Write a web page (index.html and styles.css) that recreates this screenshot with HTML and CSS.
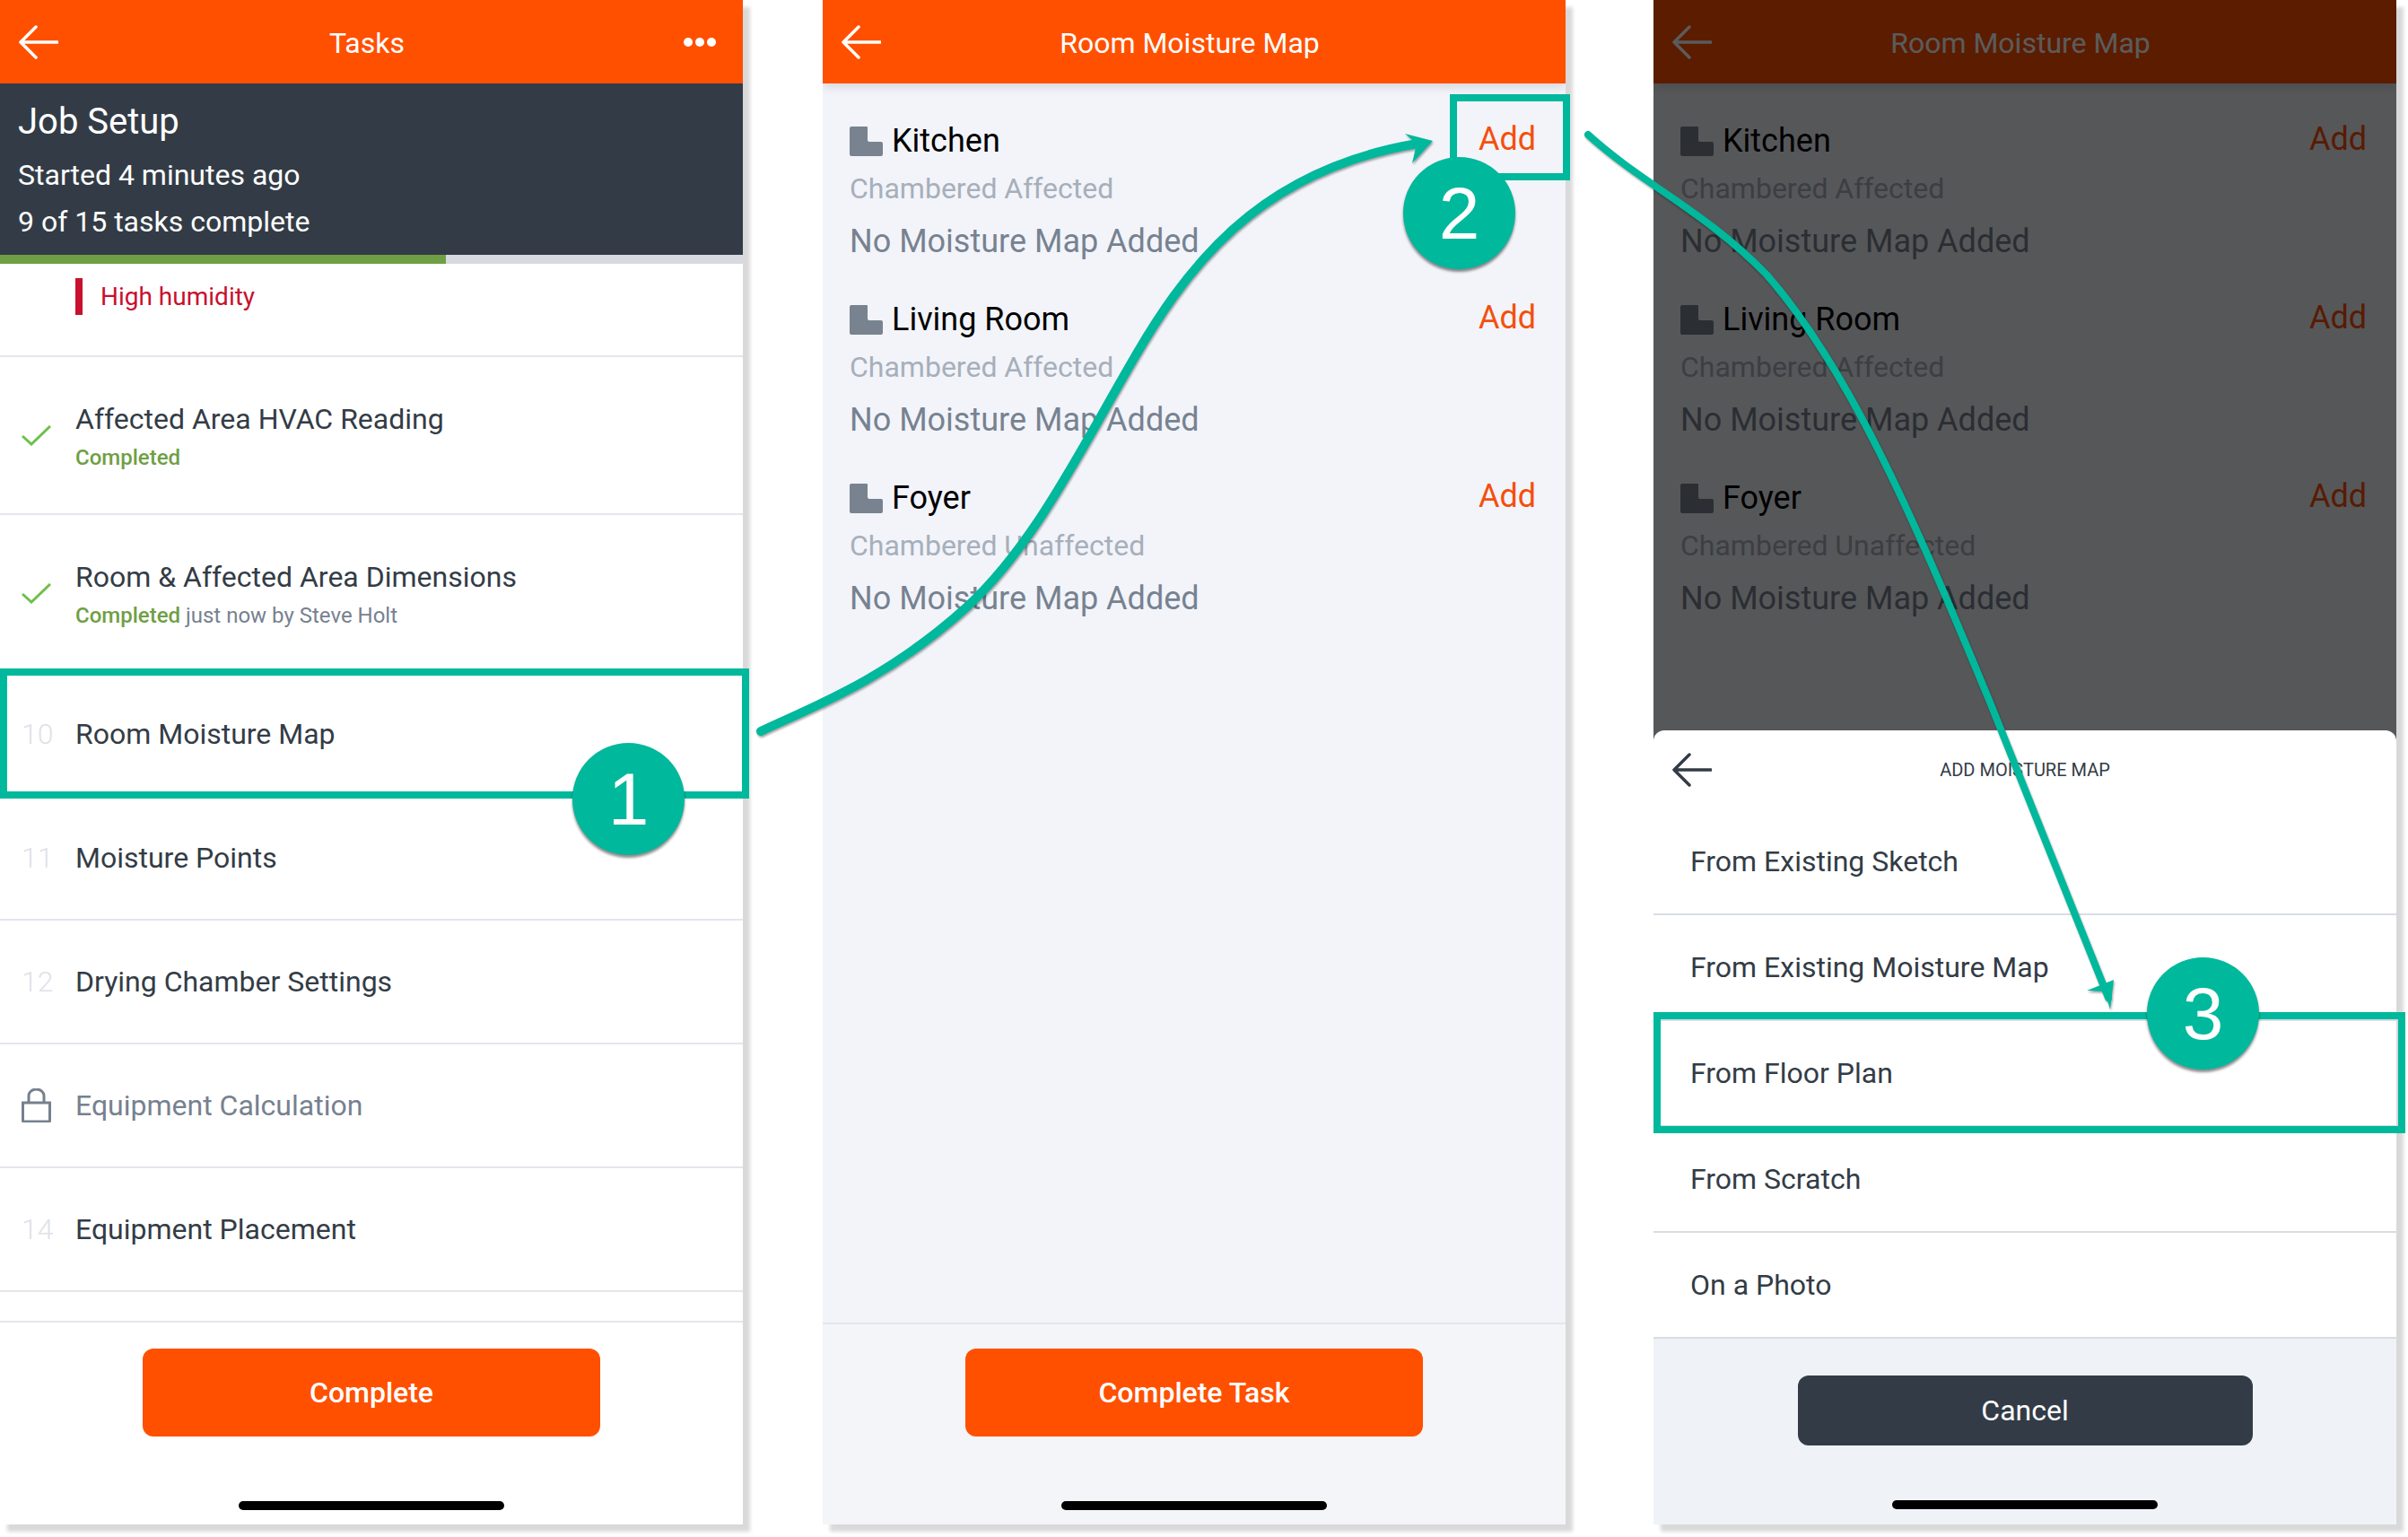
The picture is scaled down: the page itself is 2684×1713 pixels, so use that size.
FILE: index.html
```html
<!DOCTYPE html>
<html lang="en">
<head>
    <meta charset="UTF-8">
    <title>Add Moisture Map</title>
    <link rel="stylesheet" href="styles.css">
</head>
<body>

    <div class="stage">

        <!-- Tasks -->
        <div class="phone">
            <div class="topbar">
                <svg class="back" viewBox="0 0 45 38"><path d="M20 2 3 19l17 17M3 19h41"/></svg>
                <span class="topbar-title">Tasks</span>
                <div class="dots"><i></i><i></i><i></i></div>
            </div>
            <div class="job">
                <h1>Job Setup</h1>
                <p>Started 4 minutes ago</p>
                <p>9 of 15 tasks complete</p>
            </div>
            <div class="progress"><div class="progress-done"></div></div>
            <div class="tasks">
                <div class="alert-row"><span class="alert">High humidity</span></div>
                <div class="task task-tall">
                    <span class="mark"><svg class="check" viewBox="0 0 33 23"><path d="M1 12l10 9L32 1"/></svg></span>
                    <div>
                        <div class="task-name">Affected Area HVAC Reading</div>
                        <div class="task-sub"><b>Completed</b></div>
                    </div>
                </div>
                <div class="task task-tall">
                    <span class="mark"><svg class="check" viewBox="0 0 33 23"><path d="M1 12l10 9L32 1"/></svg></span>
                    <div>
                        <div class="task-name">Room &amp; Affected Area Dimensions</div>
                        <div class="task-sub"><b>Completed</b> just now by Steve Holt</div>
                    </div>
                </div>
                <div class="task"><span class="mark">10</span><div class="task-name">Room Moisture Map</div></div>
                <div class="task"><span class="mark">11</span><div class="task-name">Moisture Points</div></div>
                <div class="task"><span class="mark">12</span><div class="task-name">Drying Chamber Settings</div></div>
                <div class="task">
                    <span class="mark"><svg class="lock" viewBox="0 0 33 38"><path d="M1.5 16h30v20a1 1 0 0 1-1 1h-28a1 1 0 0 1-1-1zM8 16V8a8.500 7 0 0 1 17 0v8"/></svg></span>
                    <div class="task-name task-locked">Equipment Calculation</div>
                </div>
                <div class="task"><span class="mark">14</span><div class="task-name">Equipment Placement</div></div>
                <div class="task task-stub"></div>
            </div>
            <div class="footer">
                <button class="btn">Complete</button>
                <div class="home-bar"></div>
            </div>
        </div>

        <!-- Room Moisture Map -->
        <div class="phone phone-map">
            <div class="topbar topbar-shadow">
                <svg class="back" viewBox="0 0 45 38"><path d="M20 2 3 19l17 17M3 19h41"/></svg>
                <span class="topbar-title">Room Moisture Map</span>
                <span></span>
            </div>
            <div class="rooms">
                <div class="room">
                    <div class="room-head">
                        <svg class="room-icon" viewBox="0 0 37 33"><path d="M2 0h17a1 1 0 0 1 1 1v14a2 2 0 0 0 2 2h13a2 2 0 0 1 2 2v12a2 2 0 0 1-2 2H2a2 2 0 0 1-2-2V2a2 2 0 0 1 2-2z"/></svg>
                        <span class="room-name">Kitchen</span>
                        <span class="room-add">Add</span>
                    </div>
                    <div class="room-type">Chambered Affected</div>
                    <div class="room-status">No Moisture Map Added</div>
                </div>
                <div class="room">
                    <div class="room-head">
                        <svg class="room-icon" viewBox="0 0 37 33"><path d="M2 0h17a1 1 0 0 1 1 1v14a2 2 0 0 0 2 2h13a2 2 0 0 1 2 2v12a2 2 0 0 1-2 2H2a2 2 0 0 1-2-2V2a2 2 0 0 1 2-2z"/></svg>
                        <span class="room-name">Living Room</span>
                        <span class="room-add">Add</span>
                    </div>
                    <div class="room-type">Chambered Affected</div>
                    <div class="room-status">No Moisture Map Added</div>
                </div>
                <div class="room">
                    <div class="room-head">
                        <svg class="room-icon" viewBox="0 0 37 33"><path d="M2 0h17a1 1 0 0 1 1 1v14a2 2 0 0 0 2 2h13a2 2 0 0 1 2 2v12a2 2 0 0 1-2 2H2a2 2 0 0 1-2-2V2a2 2 0 0 1 2-2z"/></svg>
                        <span class="room-name">Foyer</span>
                        <span class="room-add">Add</span>
                    </div>
                    <div class="room-type">Chambered Unaffected</div>
                    <div class="room-status">No Moisture Map Added</div>
                </div>
            </div>
            <div class="footer footer-gray">
                <button class="btn">Complete Task</button>
                <div class="home-bar"></div>
            </div>
        </div>

        <!-- Room Moisture Map with the add sheet open -->
        <div class="phone phone-map phone-last">
            <div class="topbar topbar-shadow">
                <svg class="back" viewBox="0 0 45 38"><path d="M20 2 3 19l17 17M3 19h41"/></svg>
                <span class="topbar-title">Room Moisture Map</span>
                <span></span>
            </div>
            <div class="rooms">
                <div class="room">
                    <div class="room-head">
                        <svg class="room-icon" viewBox="0 0 37 33"><path d="M2 0h17a1 1 0 0 1 1 1v14a2 2 0 0 0 2 2h13a2 2 0 0 1 2 2v12a2 2 0 0 1-2 2H2a2 2 0 0 1-2-2V2a2 2 0 0 1 2-2z"/></svg>
                        <span class="room-name">Kitchen</span>
                        <span class="room-add">Add</span>
                    </div>
                    <div class="room-type">Chambered Affected</div>
                    <div class="room-status">No Moisture Map Added</div>
                </div>
                <div class="room">
                    <div class="room-head">
                        <svg class="room-icon" viewBox="0 0 37 33"><path d="M2 0h17a1 1 0 0 1 1 1v14a2 2 0 0 0 2 2h13a2 2 0 0 1 2 2v12a2 2 0 0 1-2 2H2a2 2 0 0 1-2-2V2a2 2 0 0 1 2-2z"/></svg>
                        <span class="room-name">Living Room</span>
                        <span class="room-add">Add</span>
                    </div>
                    <div class="room-type">Chambered Affected</div>
                    <div class="room-status">No Moisture Map Added</div>
                </div>
                <div class="room">
                    <div class="room-head">
                        <svg class="room-icon" viewBox="0 0 37 33"><path d="M2 0h17a1 1 0 0 1 1 1v14a2 2 0 0 0 2 2h13a2 2 0 0 1 2 2v12a2 2 0 0 1-2 2H2a2 2 0 0 1-2-2V2a2 2 0 0 1 2-2z"/></svg>
                        <span class="room-name">Foyer</span>
                        <span class="room-add">Add</span>
                    </div>
                    <div class="room-type">Chambered Unaffected</div>
                    <div class="room-status">No Moisture Map Added</div>
                </div>
            </div>
            <div class="dim"></div>
            <div class="sheet">
                <div class="sheet-head">
                    <svg class="back back-dark" viewBox="0 0 45 38"><path d="M20 2 3 19l17 17M3 19h41"/></svg>
                    <span class="sheet-title">ADD MOISTURE MAP</span>
                    <span></span>
                </div>
                <div class="option">From Existing Sketch</div>
                <div class="option">From Existing Moisture Map</div>
                <div class="option">From Floor Plan</div>
                <div class="option">From Scratch</div>
                <div class="option">On a Photo</div>
                <div class="sheet-footer">
                    <button class="btn btn-dark">Cancel</button>
                    <div class="home-bar"></div>
                </div>
            </div>
        </div>

        <!-- Callouts -->
        <div class="box box-1"></div>
        <div class="box box-2"></div>
        <div class="box box-3"></div>

        <svg class="arrows" viewBox="0 0 2684 1713">
            <path class="arrow-line arrow-thick" d="M848 815C900 790 985 760 1077 677C1150 610 1200 510 1256 413C1320 300 1400 190 1580 160"/>
            <path class="arrow-head" d="M1566 149 1597 157 1574 182 1579 160z"/>
            <path class="arrow-line" d="M1770 150C1830 205 1900 235 1969 306C2060 410 2130 570 2217 780L2350 1112"/>
            <path class="arrow-head" d="M2326 1104 2356 1092 2352 1125 2346 1105z"/>
        </svg>

        <div class="badge badge-1">1</div>
        <div class="badge badge-2">2</div>
        <div class="badge badge-3">3</div>
    </div>

</body>
</html>
```

FILE: styles.css
```css
* {
    margin: 0;
    padding: 0;
    box-sizing: border-box;
}

body {
    font-family: Roboto, "Liberation Sans", sans-serif;
    background: #fff;
}

.stage {
    position: relative;
    display: flex;
    width: 2684px;
    height: 1713px;
    overflow: hidden;
}

/* Phones */
.phone {
    position: relative;
    display: flex;
    flex-direction: column;
    flex: none;
    width: 828px;
    height: 1699px;
    margin-right: 89px;
    background: #fff;
    box-shadow: 8px 8px 4px #d9d9d9;
    overflow: hidden;
}

.phone-map {
    background: #f2f4fa;
}

.phone-last {
    margin-left: 9px;
    margin-right: 0;
}

.topbar {
    display: grid;
    grid-template-columns: 1fr auto 1fr;
    align-items: center;
    flex: none;
    height: 93px;
    padding: 0 30px 0 20px;
    background: #ff5000;
    color: #fff;
    font-size: 32px;
}

.phone-map .topbar {
    padding-left: 20px;
}

.topbar-shadow {
    position: relative;
    box-shadow: 0 4px 10px rgba(0, 0, 0, 0.12);
}

.topbar-title {
    padding-top: 3px;
}

.back {
    width: 45px;
    height: 38px;
    fill: none;
    stroke: #fff;
    stroke-width: 3.5;
    stroke-linecap: round;
    stroke-linejoin: round;
}

.back-dark {
    stroke: #333c46;
}

.dots {
    display: flex;
    justify-content: flex-end;
    gap: 3px;
}

.dots i {
    width: 10px;
    height: 10px;
    border-radius: 50%;
    background: #fff;
}

/* Job summary */
.job {
    flex: none;
    height: 191px;
    padding: 19px 20px 0;
    background: #333c46;
    color: #fff;
    font-size: 32px;
}

.job h1 {
    font-size: 40px;
    font-weight: 400;
    line-height: 48px;
    margin-bottom: 9px;
}

.job p {
    line-height: 52px;
}

.progress {
    flex: none;
    height: 10px;
    background: #d7d9e0;
}

.progress-done {
    width: 497px;
    height: 100%;
    background: #6f9f45;
}

/* Task list */
.tasks {
    flex: 1;
}

.alert-row {
    height: 104px;
    padding: 16px 0 0 84px;
    border-bottom: 2px solid #e4e6ec;
}

.alert {
    display: block;
    height: 41px;
    padding-left: 20px;
    border-left: 8px solid #c8102e;
    color: #c8102e;
    font-size: 28px;
    line-height: 41px;
}

.task {
    display: flex;
    align-items: center;
    height: 138px;
    border-bottom: 2px solid #e4e6ec;
}

.task-tall {
    height: 176px;
}

.task-stub {
    height: 34px;
}

.mark {
    flex: none;
    display: flex;
    align-items: center;
    width: 84px;
    padding-left: 24px;
    color: #dfe1e8;
    font-size: 32px;
    font-weight: 300;
}

.task-name {
    color: #333c46;
    font-size: 32px;
    line-height: 44px;
}

.task-locked {
    color: #76818f;
}

.task-sub {
    margin-top: 6px;
    color: #76818f;
    font-size: 24px;
    line-height: 30px;
}

.task-sub b {
    color: #6f9f45;
    font-weight: 500;
}

.check {
    width: 33px;
    height: 23px;
    fill: none;
    stroke: #6cc04a;
    stroke-width: 3;
}

.lock {
    width: 33px;
    height: 38px;
    fill: none;
    stroke: #76818f;
    stroke-width: 3;
}

/* Footer */
.footer {
    display: flex;
    flex-direction: column;
    align-items: center;
    flex: none;
    height: 225px;
    padding-top: 29px;
    background: #fff;
}

.footer-gray {
    background: #f4f5f8;
    border-top: 2px solid #e4e6ec;
    padding-top: 27px;
}

.btn {
    width: 510px;
    height: 98px;
    border: none;
    border-radius: 12px;
    background: #ff5000;
    color: #fff;
    font-family: inherit;
    font-size: 32px;
    font-weight: 500;
}

.btn-dark {
    width: 507px;
    height: 78px;
    background: #333c46;
    font-weight: 400;
}

.home-bar {
    width: 296px;
    height: 10px;
    margin-top: 72px;
    border-radius: 5px;
    background: #000;
}

/* Rooms */
.rooms {
    flex: 1;
    padding: 41px 33px 0 30px;
}

.room {
    margin-bottom: 35px;
}

.room-head {
    display: flex;
    align-items: center;
    height: 46px;
}

.room-icon {
    flex: none;
    width: 37px;
    height: 33px;
    margin-right: 10px;
    fill: #78838f;
}

.room-name {
    flex: 1;
    color: #000;
    font-size: 36px;
}

.room-add {
    margin-top: -4px;
    color: #f4500c;
    font-size: 36px;
}

.room-type {
    color: #a7afba;
    font-size: 32px;
    line-height: 60px;
}

.room-status {
    color: #778290;
    font-size: 36px;
    line-height: 58px;
}

/* Bottom sheet */
.dim {
    position: absolute;
    top: 0;
    right: 0;
    bottom: 0;
    left: 0;
    background: rgba(0, 0, 0, 0.645);
}

.sheet {
    position: absolute;
    left: 0;
    right: 0;
    bottom: 0;
    height: 885px;
    background: #fff;
    border-radius: 12px 12px 0 0;
}

.sheet-head {
    display: grid;
    grid-template-columns: 1fr auto 1fr;
    align-items: center;
    height: 88px;
    padding: 0 20px;
}

.sheet-title {
    color: #333c46;
    font-size: 20px;
}

.option {
    display: flex;
    align-items: center;
    height: 118px;
    padding-left: 41px;
    border-bottom: 2px solid #d8dde3;
    color: #333c46;
    font-size: 32px;
}

.sheet-footer {
    display: flex;
    flex-direction: column;
    align-items: center;
    height: 207px;
    padding-top: 41px;
    background: #eff3f8;
}

.sheet-footer .home-bar {
    margin-top: 61px;
}

/* Callouts */
.box {
    position: absolute;
    border: 8px solid #00b89c;
}

.box-1 {
    left: 0;
    top: 745px;
    width: 835px;
    height: 145px;
}

.box-2 {
    left: 1616px;
    top: 105px;
    width: 134px;
    height: 96px;
}

.box-3 {
    left: 1843px;
    top: 1128px;
    width: 838px;
    height: 135px;
}

.arrows {
    position: absolute;
    top: 0;
    left: 0;
    width: 2684px;
    height: 1713px;
    filter: drop-shadow(1px 2px 1px rgba(0, 0, 0, 0.35));
}

.arrow-line {
    fill: none;
    stroke: #00b89c;
    stroke-width: 8;
    stroke-linecap: round;
}

.arrow-thick {
    stroke-width: 10;
}

.arrow-head {
    fill: #00b89c;
}

.badge {
    position: absolute;
    display: flex;
    align-items: center;
    justify-content: center;
    width: 125px;
    height: 125px;
    border-radius: 50%;
    background: #00b89c;
    box-shadow: 0 3px 3px rgba(0, 0, 0, 0.45);
    color: #fff;
    font-family: "Liberation Sans", Arial, sans-serif;
    font-size: 82px;
}

.badge-1 {
    left: 638px;
    top: 828px;
}

.badge-2 {
    left: 1564px;
    top: 175px;
}

.badge-3 {
    left: 2393px;
    top: 1067px;
}
```
